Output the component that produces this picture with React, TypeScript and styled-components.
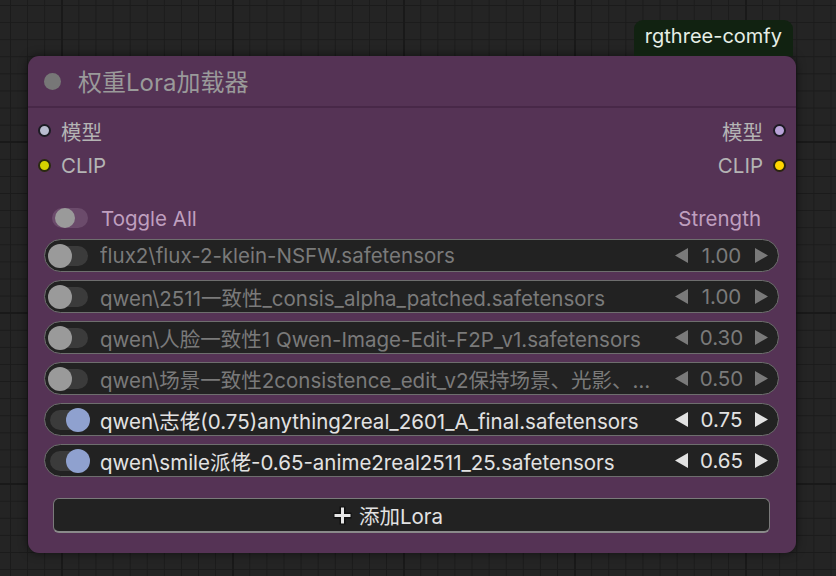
import React from 'react';
import styled, { createGlobalStyle } from 'styled-components';

interface LoraRow {
    name: string;
    strength: string;
    on: boolean;
}

const loras: LoraRow[] = [
    { name: 'flux2\\flux-2-klein-NSFW.safetensors', strength: '1.00', on: false },
    { name: 'qwen\\2511一致性_consis_alpha_patched.safetensors', strength: '1.00', on: false },
    { name: 'qwen\\人脸一致性1 Qwen-Image-Edit-F2P_v1.safetensors', strength: '0.30', on: false },
    { name: 'qwen\\场景一致性2consistence_edit_v2保持场景、光影、…', strength: '0.50', on: false },
    { name: 'qwen\\志佬(0.75)anything2real_2601_A_final.safetensors', strength: '0.75', on: true },
    { name: 'qwen\\smile派佬-0.65-anime2real2511_25.safetensors', strength: '0.65', on: true },
];

const GlobalStyle = createGlobalStyle`
  html, body {
    margin: 0;
    padding: 0;
    width: 100%;
    height: 100%;
    overflow: hidden;
  }
  body {
    font-family: Inter, "Noto Sans CJK SC", sans-serif;
    background: #232323;
  }
`;

const Canvas = styled.div`
  position: relative;
  width: 836px;
  height: 576px;
  overflow: hidden;
  background-color: #242424;
  background-image:
    linear-gradient(#191919 2px, transparent 2px),
    linear-gradient(90deg, #191919 2px, transparent 2px),
    linear-gradient(#1b1b1b 1px, transparent 1px),
    linear-gradient(90deg, #1b1b1b 1px, transparent 1px);
  background-size: 171px 171px, 171px 171px, 17.1px 17.1px, 17.1px 17.1px;
  background-position: 0 141px, 61px 0, 0 5px, 10px 0;
`;

const Node = styled.div`
  position: absolute;
  left: 28px;
  top: 56px;
  width: 768px;
  height: 497px;
  box-sizing: border-box;
  background: #553355;
  border-radius: 11px;
  box-shadow: 0 0 10px rgba(0, 0, 0, 0.55);
  display: flex;
  flex-direction: column;
`;

const Badge = styled.div`
  position: absolute;
  top: -36px;
  right: 3px;
  height: 36px;
  padding: 0 11px;
  box-sizing: border-box;
  background: #112211;
  border-radius: 9px 9px 0 0;
  color: #e6eee6;
  font-size: 20px;
  line-height: 33px;
`;

const TitleBar = styled.div`
  height: 50px;
  flex-shrink: 0;
  display: flex;
  align-items: center;
  padding-left: 16px;
  border-bottom: 2px solid #482848;
  gap: 17px;
`;

const TitleDot = styled.div`
  width: 17px;
  height: 17px;
  border-radius: 50%;
  background: #777;
`;

const TitleText = styled.div`
  color: #9a9a9a;
  font-size: 24px;
  padding-bottom: 1px;
`;

const Slots = styled.div`
  padding: 5px 10px 0 10px;
  display: flex;
  flex-direction: column;
`;

const SlotRow = styled.div`
  height: 35px;
  display: flex;
  align-items: center;
  justify-content: space-between;
`;

const Slot = styled.div<{ $right?: boolean }>`
  display: flex;
  align-items: center;
  gap: 10px;
  flex-direction: ${p => (p.$right ? 'row-reverse' : 'row')};
  color: #b4b4b4;
  font-size: 20.5px;
`;

const SlotDot = styled.div<{ $fill: string; $ring: string }>`
  width: 9px;
  height: 9px;
  border-radius: 50%;
  background: ${p => p.$fill};
  border: 2px solid ${p => p.$ring};
`;

const Widgets = styled.div`
  margin-top: 23px;
  padding: 0 17px 0 16px;
  display: flex;
  flex-direction: column;
  gap: 8px;
`;

const HeaderRow = styled.div`
  height: 24px;
  display: flex;
  align-items: center;
  padding: 0 18px 0 8px;
  margin-bottom: 1px;
  color: #bf9fbf;
  font-size: 20.5px;
`;

const HeaderLabel = styled.div`
  flex: 1;
  margin-left: 13px;
`;

const Track = styled.div<{ $on: boolean; $header?: boolean }>`
  position: relative;
  flex-shrink: 0;
  width: ${p => (p.$header ? 36 : 38)}px;
  height: 20px;
  border-radius: 10px;
  background: ${p => (p.$header ? '#6b4b6b' : '#3b3b3b')};
`;

const Knob = styled.div<{ $on: boolean; $header?: boolean }>`
  position: absolute;
  top: 50%;
  width: ${p => (p.$header ? 20 : 24)}px;
  height: ${p => (p.$header ? 20 : 24)}px;
  margin-top: ${p => (p.$header ? -10 : -12)}px;
  border-radius: 50%;
  background: ${p => (p.$on ? '#8fa1cf' : '#9a9a9a')};
  ${p => (p.$on ? 'right: -2px;' : `left: ${p.$header ? 3 : -2}px;`)}
`;

const Row = styled.div`
  height: 33px;
  box-sizing: border-box;
  border: 1px solid #6e6e6e;
  border-radius: 17px;
  background: #222;
  display: flex;
  align-items: center;
  padding: 0 9px 0 5px;
`;

const RowName = styled.div<{ $on: boolean }>`
  flex: 1;
  min-width: 0;
  margin-left: 12px;
  margin-right: 12px;
  white-space: nowrap;
  overflow: hidden;
  text-overflow: ellipsis;
  font-size: 20.5px;
  color: ${p => (p.$on ? '#e2e2e2' : '#7a7a7a')};
`;

const Strength = styled.div<{ $on: boolean }>`
  display: flex;
  align-items: center;
  color: ${p => (p.$on ? '#e2e2e2' : '#7a7a7a')};
  font-size: 20.5px;
`;

const Value = styled.div`
  width: 65px;
  text-align: center;
`;

const AddButton = styled.div`
  margin: 21px 26px 0 25px;
  height: 35px;
  box-sizing: border-box;
  border: 1px solid #7a7a7a;
  border-bottom: 2px solid #8a8a8a;
  border-radius: 6px;
  background: #222;
  display: flex;
  align-items: center;
  justify-content: center;
  padding-right: 48px;
  gap: 6px;
  color: #e2e2e2;
  font-size: 20.5px;
`;

const Arrow: React.FC<{ dir: 'left' | 'right'; color: string }> = ({ dir, color }) => (
    <svg width="15" height="17" viewBox="0 0 15 17">
        {dir === 'left'
            ? <polygon points="14,1 14,16 1,8.5" fill={color} />
            : <polygon points="1,1 1,16 14,8.5" fill={color} />}
    </svg>
);

const Plus = () => (
    <svg width="21" height="21" viewBox="0 0 21 21">
        <path d="M10.5 1.5 V19.5 M1.5 10.5 H19.5" stroke="#111" strokeWidth="6" />
        <path d="M10.5 2.5 V18.5 M2.5 10.5 H18.5" stroke="#e6e6e6" strokeWidth="3" />
    </svg>
);

export default function App() {
    return (
        <>
            <GlobalStyle />
            <Canvas>
                <Node>
                    <Badge>rgthree-comfy</Badge>
                    <TitleBar>
                        <TitleDot />
                        <TitleText>权重Lora加载器</TitleText>
                    </TitleBar>
                    <Slots>
                        <SlotRow>
                            <Slot>
                                <SlotDot $fill="#b9bdd0" $ring="#1c1c24" />
                                模型
                            </Slot>
                            <Slot $right>
                                <SlotDot $fill="#b9a3d9" $ring="#1e1a24" />
                                模型
                            </Slot>
                        </SlotRow>
                        <SlotRow>
                            <Slot>
                                <SlotDot $fill="#d6d200" $ring="#2a2a10" />
                                CLIP
                            </Slot>
                            <Slot $right>
                                <SlotDot $fill="#ffd500" $ring="#2a2410" />
                                CLIP
                            </Slot>
                        </SlotRow>
                    </Slots>
                    <Widgets>
                        <HeaderRow>
                            <Track $on={false} $header>
                                <Knob $on={false} $header />
                            </Track>
                            <HeaderLabel>Toggle All</HeaderLabel>
                            <span>Strength</span>
                        </HeaderRow>
                        {loras.map(l => {
                            const c = l.on ? '#e2e2e2' : '#7a7a7a';
                            return (
                                <Row key={l.name}>
                                    <Track $on={l.on}>
                                        <Knob $on={l.on} />
                                    </Track>
                                    <RowName $on={l.on}>{l.name}</RowName>
                                    <Strength $on={l.on}>
                                        <Arrow dir="left" color={c} />
                                        <Value>{l.strength}</Value>
                                        <Arrow dir="right" color={c} />
                                    </Strength>
                                </Row>
                            );
                        })}
                    </Widgets>
                    <AddButton>
                        <Plus />
                        添加Lora
                    </AddButton>
                </Node>
            </Canvas>
        </>
    );
}
